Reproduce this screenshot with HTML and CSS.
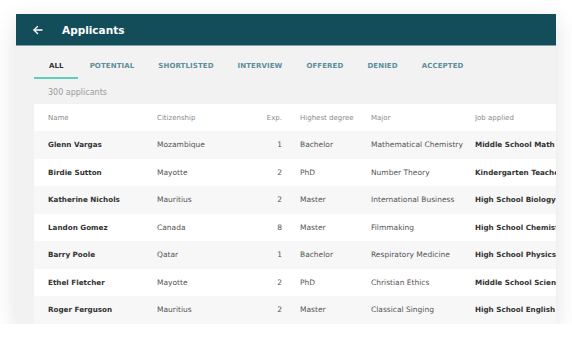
FILE: index.html
```html
<!DOCTYPE html>
<html lang="en">
    <head>
        <meta charset="UTF-8" />
        <meta name="viewport" content="width=device-width, initial-scale=1.0" />
        <title>Applicants</title>
        <link rel="stylesheet" href="styles.css">
    </head>
    <body>
        <div class="card">
            <header class="topbar">
                <button class="back" aria-label="Back">
                    <svg width="10" height="10" viewBox="0 0 10 10" fill="none" stroke="currentColor" stroke-width="1.4" stroke-linecap="round" stroke-linejoin="round">
                        <line x1="9" y1="5" x2="1" y2="5"></line>
                        <polyline points="4.5 1.5 1 5 4.5 8.5"></polyline>
                    </svg>
                </button>
                <h1>Applicants</h1>
            </header>
            <div class="content">
                <nav class="tabs">
                    <a class="tab active">ALL</a>
                    <a class="tab">POTENTIAL</a>
                    <a class="tab">SHORTLISTED</a>
                    <a class="tab">INTERVIEW</a>
                    <a class="tab">OFFERED</a>
                    <a class="tab">DENIED</a>
                    <a class="tab">ACCEPTED</a>
                </nav>
                <p class="count">300 applicants</p>
                <table class="applicants">
                    <colgroup>
                        <col class="c-name">
                        <col class="c-country">
                        <col class="c-exp">
                        <col class="c-degree">
                        <col class="c-major">
                        <col class="c-job">
                    </colgroup>
                    <thead>
                        <tr>
                            <th>Name</th>
                            <th>Citizenship</th>
                            <th class="num">Exp.</th>
                            <th>Highest degree</th>
                            <th>Major</th>
                            <th>Job applied</th>
                        </tr>
                    </thead>
                    <tbody>
                        <tr>
                            <td class="name">Glenn Vargas</td>
                            <td>Mozambique</td>
                            <td class="num">1</td>
                            <td>Bachelor</td>
                            <td>Mathematical Chemistry</td>
                            <td class="job">Middle School Math Teacher</td>
                        </tr>
                        <tr>
                            <td class="name">Birdie Sutton</td>
                            <td>Mayotte</td>
                            <td class="num">2</td>
                            <td>PhD</td>
                            <td>Number Theory</td>
                            <td class="job">Kindergarten Teacher</td>
                        </tr>
                        <tr>
                            <td class="name">Katherine Nichols</td>
                            <td>Mauritius</td>
                            <td class="num">2</td>
                            <td>Master</td>
                            <td>International Business</td>
                            <td class="job">High School Biology Teacher</td>
                        </tr>
                        <tr>
                            <td class="name">Landon Gomez</td>
                            <td>Canada</td>
                            <td class="num">8</td>
                            <td>Master</td>
                            <td>Filmmaking</td>
                            <td class="job">High School Chemistry Teacher</td>
                        </tr>
                        <tr>
                            <td class="name">Barry Poole</td>
                            <td>Qatar</td>
                            <td class="num">1</td>
                            <td>Bachelor</td>
                            <td>Respiratory Medicine</td>
                            <td class="job">High School Physics Teacher</td>
                        </tr>
                        <tr>
                            <td class="name">Ethel Fletcher</td>
                            <td>Mayotte</td>
                            <td class="num">2</td>
                            <td>PhD</td>
                            <td>Christian Ethics</td>
                            <td class="job">Middle School Science Teacher</td>
                        </tr>
                        <tr>
                            <td class="name">Roger Ferguson</td>
                            <td>Mauritius</td>
                            <td class="num">2</td>
                            <td>Master</td>
                            <td>Classical Singing</td>
                            <td class="job">High School English Teacher</td>
                        </tr>
                    </tbody>
                </table>
            </div>
        </div>
    </body>
</html>
```

FILE: styles.css
```css
*,
*::before,
*::after {
    box-sizing: border-box;
}

body {
    margin: 0;
    background: #fff;
    font-family: "DejaVu Sans", Verdana, sans-serif;
    color: #333;
}

.card {
    width: 540px;
    height: 310px;
    margin: 14px 0 0 16px;
    overflow: hidden;
    background: #f2f2f2;
    box-shadow: 0 6px 22px rgba(0, 0, 0, 0.12);
}

.topbar {
    display: flex;
    align-items: center;
    height: 32px;
    padding-left: 16px;
    background: #134d5a;
    border-bottom: 1px solid #7fa3ab;
    color: #fff;
}

.back {
    display: flex;
    margin-left: 1px;
    padding: 0;
    border: 0;
    background: none;
    color: #fff;
}

.topbar h1 {
    margin: 0 0 0 19px;
    font-size: 10.5px;
    font-weight: bold;
}

.content {
    padding-left: 18px;
}

.tabs {
    display: flex;
    height: 33px;
    padding-top: 16px;
}

.tab {
    padding: 0 12px;
    height: 17px;
    font-size: 7px;
    font-weight: bold;
    letter-spacing: 0.1px;
    color: #5d8e99;
    border-bottom: 2px solid transparent;
}

.tab.active {
    color: #333;
    border-color: #5fd0b8;
    padding: 0 14px 0 15px;
}

.count {
    margin: 0;
    height: 25px;
    padding: 9px 0 0 14px;
    font-size: 8px;
    color: #9a9a9a;
}

.applicants {
    width: 561px;
    table-layout: fixed;
    border-collapse: collapse;
    background: #fff;
    font-size: 7.5px;
    white-space: nowrap;
}

.c-name { width: 123px; }
.c-country { width: 93px; }
.c-exp { width: 50px; }
.c-degree { width: 71px; }
.c-major { width: 104px; }
.c-job { width: 120px; }

.applicants th,
.applicants td {
    padding: 0;
    text-align: left;
    overflow: hidden;
}

.applicants th {
    height: 27px;
    font-weight: normal;
    font-size: 7px;
    color: #8a8a8a;
}

.applicants td {
    height: 27.5px;
    color: #555;
}

.applicants th:first-child,
.applicants td:first-child {
    padding-left: 14px;
}

.applicants .num {
    text-align: right;
    padding-right: 18px;
}

.applicants tbody tr:nth-child(odd) {
    background: #f7f7f7;
}

.applicants .name,
.applicants .job {
    font-weight: bold;
    font-size: 7.2px;
    color: #333;
}
```
